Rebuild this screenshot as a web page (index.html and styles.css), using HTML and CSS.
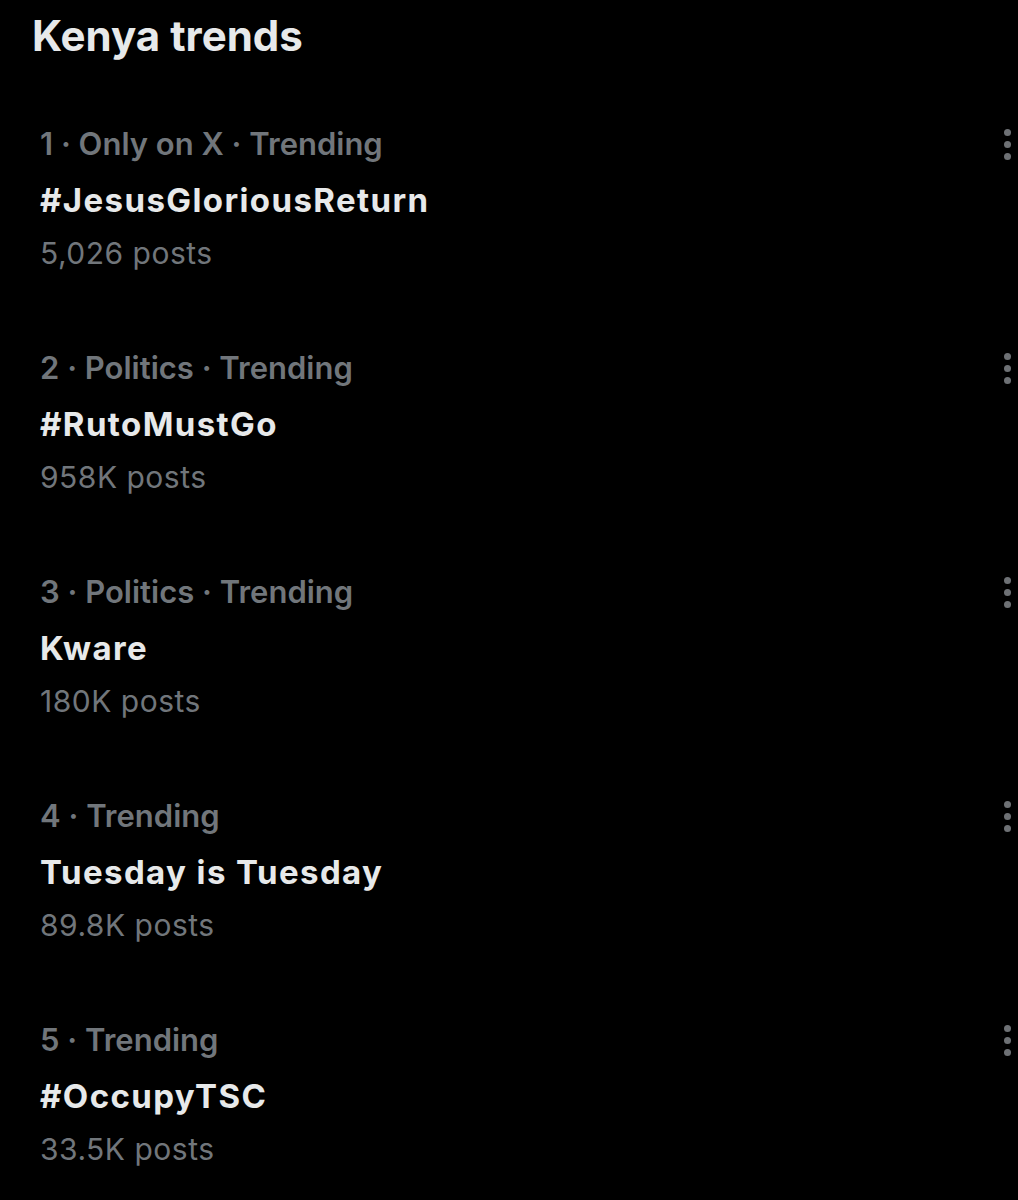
FILE: index.html
```html
<!DOCTYPE html>
<html>
<head>
<meta charset="utf-8">
<link rel="stylesheet" href="styles.css">
</head>
<body>
<div class="page">
  <h1 class="heading">Kenya trends</h1>
  <ul class="trends">
    <li class="trend">
      <div class="info">
        <div class="meta">1 · Only on X · Trending</div>
        <div class="name">#JesusGloriousReturn</div>
        <div class="count">5,026 posts</div>
      </div>
      <div class="more"><span></span><span></span><span></span></div>
    </li>
    <li class="trend">
      <div class="info">
        <div class="meta">2 · Politics · Trending</div>
        <div class="name">#RutoMustGo</div>
        <div class="count">958K posts</div>
      </div>
      <div class="more"><span></span><span></span><span></span></div>
    </li>
    <li class="trend">
      <div class="info">
        <div class="meta">3 · Politics · Trending</div>
        <div class="name">Kware</div>
        <div class="count">180K posts</div>
      </div>
      <div class="more"><span></span><span></span><span></span></div>
    </li>
    <li class="trend">
      <div class="info">
        <div class="meta">4 · Trending</div>
        <div class="name">Tuesday is Tuesday</div>
        <div class="count">89.8K posts</div>
      </div>
      <div class="more"><span></span><span></span><span></span></div>
    </li>
    <li class="trend">
      <div class="info">
        <div class="meta">5 · Trending</div>
        <div class="name">#OccupyTSC</div>
        <div class="count">33.5K posts</div>
      </div>
      <div class="more"><span></span><span></span><span></span></div>
    </li>
  </ul>
</div>
</body>
</html>
```
FILE: styles.css
```css
html, body {
  margin: 0;
  padding: 0;
  background: #000;
}
body {
  width: 1018px;
  height: 1200px;
  overflow: hidden;
  font-family: "Inter", "Liberation Sans", sans-serif;
  color: #e7e9ea;
}
.page {
  display: flex;
  flex-direction: column;
}
.heading {
  margin: 0;
  padding: 0 0 0 32px;
  height: 87px;
  line-height: 72px;
  font-size: 42px;
  font-weight: 700;
  letter-spacing: 0;
}
.trends {
  list-style: none;
  margin: 0;
  padding: 0;
}
.trend {
  display: flex;
  justify-content: space-between;
  align-items: flex-start;
  height: 224px;
  box-sizing: border-box;
  padding: 29px 0 0 40px;
}
.info {
  display: flex;
  flex-direction: column;
}
.meta, .name, .count {
  line-height: 55px;
  white-space: nowrap;
}
.meta {
  font-size: 31px;
  font-weight: 600;
  color: #71767b;
}
.name {
  font-size: 33px;
  font-weight: 700;
  letter-spacing: 1.4px;
  color: #e7e9ea;
  padding-top: 2px;
  margin-bottom: -2px;
}
.count {
  font-size: 30px;
  font-weight: 400;
  letter-spacing: 0.5px;
  color: #71767b;
}
.more {
  display: flex;
  flex-direction: column;
  gap: 5px;
  padding: 13px 7px 0 0;
}
.more span {
  width: 7px;
  height: 7px;
  border-radius: 50%;
  background: #6e7175;
}
```
